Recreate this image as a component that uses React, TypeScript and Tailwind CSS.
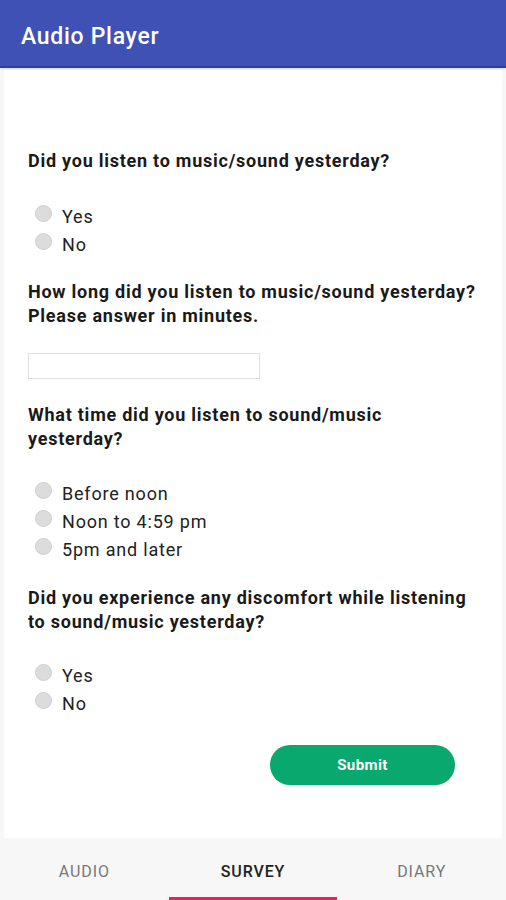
const questions = [
  { q: ['Did you listen to music/sound yesterday?'], options: ['Yes', 'No'] },
  { q: ['How long did you listen to music/sound yesterday?', 'Please answer in minutes.'], input: true },
  { q: ['What time did you listen to sound/music', 'yesterday?'], options: ['Before noon', 'Noon to 4:59 pm', '5pm and later'] },
  { q: ['Did you experience any discomfort while listening', 'to sound/music yesterday?'], options: ['Yes', 'No'] },
]

function Radio({ label }: { label: string }) {
  return (
    <div className="flex items-center h-[28px]">
      <span className="w-[17px] h-[17px] rounded-full bg-[#dcdcdc] border border-[#cfcfcf] ml-[7px] mr-[10px] -mt-[5px]" />
      <span className="text-[18px] tracking-[0.8px] text-[#222]">{label}</span>
    </div>
  )
}

function Question({ lines }: { lines: string[] }) {
  return (
    <div className="text-[18px] font-bold tracking-[0.75px] text-[#1a1a1a] leading-[24px]">
      {lines.map(l => <div key={l}>{l}</div>)}
    </div>
  )
}

export default function App() {
  return (
    <div className="w-[506px] h-[900px] flex flex-col bg-[#f7f7f7] overflow-hidden" style={{ fontFamily: 'Roboto, "Liberation Sans", sans-serif' }}>
      <div className="h-[68px] bg-[#3f51b5] border-b-2 border-[#2f3fa0] flex items-center px-[21px] shrink-0 shadow">
        <span className="text-white text-[23px] tracking-[0.7px] font-medium mt-[8px]">Audio Player</span>
      </div>
      <div className="flex-1 mx-[4px] mt-[2px] bg-white px-[24px] pt-[79px]">
        <Question lines={questions[0].q} />
        <div className="mt-[29px]">
          {questions[0].options!.map(o => <Radio key={o} label={o} />)}
        </div>
        <div className="mt-[22px]">
          <Question lines={questions[1].q} />
        </div>
        <div className="mt-[25px] w-[232px] h-[26px] border border-[#dedede]" />
        <div className="mt-[24px]">
          <Question lines={questions[2].q} />
        </div>
        <div className="mt-[28px]">
          {questions[2].options!.map(o => <Radio key={o} label={o} />)}
        </div>
        <div className="mt-[23px]">
          <Question lines={questions[3].q} />
        </div>
        <div className="mt-[27px]">
          {questions[3].options!.map(o => <Radio key={o} label={o} />)}
        </div>
        <div className="flex justify-end mt-[28px] pr-[23px]">
          <button className="w-[185px] h-[40px] rounded-full bg-[#09a86e] text-white text-[15px] tracking-[0.4px] font-bold">Submit</button>
        </div>
      </div>
      <div className="h-[62px] shrink-0 grid grid-cols-3 bg-[#f7f7f7]">
        {['AUDIO', 'SURVEY', 'DIARY'].map(t => (
          <div key={t} className={`relative flex items-center justify-center text-[16px] tracking-[0.9px] ${t === 'SURVEY' ? 'text-[#222] font-medium' : 'text-[#777] font-normal'}`}>
            <span className="mt-[6px]">{t}</span>
            {t === 'SURVEY' && <span className="absolute bottom-0 left-0 right-0 h-[3px] bg-[#e91e63]" />}
          </div>
        ))}
      </div>
    </div>
  )
}
